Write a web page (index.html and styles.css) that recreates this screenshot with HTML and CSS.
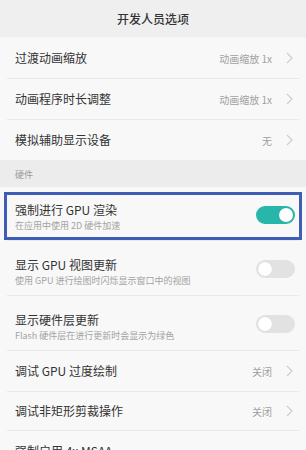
FILE: index.html
```html
<!DOCTYPE html>
<html lang="zh">
<head>
<meta charset="utf-8">
<title>开发人员选项</title>
<link rel="stylesheet" href="styles.css">
</head>
<body>
<div class="screen">
  <header class="topbar">开发人员选项</header>
  <div class="list">
    <div class="row">
      <span class="title">过渡动画缩放</span>
      <span class="value">动画缩放 1x<svg class="chev" viewBox="0 0 7 12"><polyline points="1,1 6,6 1,11"/></svg></span>
    </div>
    <div class="row">
      <span class="title">动画程序时长调整</span>
      <span class="value">动画缩放 1x<svg class="chev" viewBox="0 0 7 12"><polyline points="1,1 6,6 1,11"/></svg></span>
    </div>
    <div class="row last">
      <span class="title">模拟辅助显示设备</span>
      <span class="value">无<svg class="chev" viewBox="0 0 7 12"><polyline points="1,1 6,6 1,11"/></svg></span>
    </div>
    <div class="section">硬件</div>
    <div class="row two first highlight">
      <div class="text">
        <div class="title">强制进行 GPU 渲染</div>
        <div class="sub">在应用中使用 2D 硬件加速</div>
      </div>
      <span class="toggle on"><span class="knob"></span></span>
    </div>
    <div class="row two">
      <div class="text">
        <div class="title">显示 GPU 视图更新</div>
        <div class="sub">使用 GPU 进行绘图时闪烁显示窗口中的视图</div>
      </div>
      <span class="toggle"><span class="knob"></span></span>
    </div>
    <div class="row two">
      <div class="text">
        <div class="title">显示硬件层更新</div>
        <div class="sub">Flash 硬件层在进行更新时会显示为绿色</div>
      </div>
      <span class="toggle"><span class="knob"></span></span>
    </div>
    <div class="row">
      <span class="title">调试 GPU 过度绘制</span>
      <span class="value">关闭<svg class="chev" viewBox="0 0 7 12"><polyline points="1,1 6,6 1,11"/></svg></span>
    </div>
    <div class="row r39">
      <span class="title">调试非矩形剪裁操作</span>
      <span class="value">关闭<svg class="chev" viewBox="0 0 7 12"><polyline points="1,1 6,6 1,11"/></svg></span>
    </div>
    <div class="row">
      <span class="title">强制启用 4x MSAA</span>
      <span class="value"></span>
    </div>
  </div>
</div>
</body>
</html>
```
FILE: styles.css
```css
* { box-sizing: border-box; }
html, body {
  margin: 0;
  padding: 0;
  background: #f8f8f8;
}
body {
  font-family: "Noto Sans CJK SC", "Noto Sans", sans-serif;
  color: #333;
  width: 306px;
  height: 450px;
  overflow: hidden;
}
.screen {
  display: flex;
  flex-direction: column;
}
.topbar {
  height: 38px;
  background: #efefef;
  display: flex;
  align-items: center;
  justify-content: center;
  font-size: 12px;
  font-weight: 500;
  color: #333;
  border-bottom: 1px solid #f4f4f4;
}
.list {
  display: flex;
  flex-direction: column;
  background: #f8f8f8;
}
.row {
  height: 41px;
  margin: 0 7px;
  padding: 0 6px 0 8px;
  display: flex;
  align-items: center;
  justify-content: space-between;
  border-bottom: 1px solid #e9e9e9;
  position: relative;
  flex-shrink: 0;
}
.row.r39 { height: 39px; }
.row.last { height: 40px; border-bottom: none; }
.row .title {
  font-size: 12px;
  line-height: 16px;
  color: #333;
}
.value {
  display: flex;
  align-items: center;
  font-size: 10px;
  color: #a0a0a0;
}
.chev {
  width: 7px;
  height: 12px;
  margin-left: 14px;
  fill: none;
  stroke: #cdcdcd;
  stroke-width: 1.1;
}
.section {
  height: 27px;
  background: #ececec;
  padding: 8px 15px 0;
  font-size: 9px;
  line-height: 14px;
  color: #9a9a9a;
  flex-shrink: 0;
}
.row.two {
  height: 55px;
  padding-right: 4px;
}
.row.two.first { height: 54px; }
.text {
  margin-top: 8px;
  display: flex;
  flex-direction: column;
}
.sub {
  font-size: 9px;
  line-height: 14px;
  color: #a3a3a3;
  margin-top: 1px;
}
.toggle {
  width: 39px;
  height: 18px;
  border-radius: 9px;
  background: #e2e2e2;
  position: relative;
  flex-shrink: 0;
  margin-top: 2px;
}
.toggle .knob {
  position: absolute;
  top: 2px;
  left: 2px;
  width: 14px;
  height: 14px;
  border-radius: 50%;
  background: #fff;
  box-shadow: 0 0 1px rgba(0,0,0,0.12);
}
.toggle.on { background: #29b6aa; }
.toggle.on .knob { left: auto; right: 2px; }
.highlight::before {
  content: "";
  position: absolute;
  left: -3px;
  right: -3px;
  top: 5px;
  bottom: 0;
  border: 3px solid #3f5db4;
}
```
